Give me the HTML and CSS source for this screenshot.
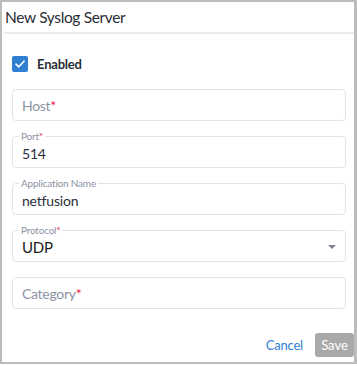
FILE: index.html
```html
<!DOCTYPE html>
<html>
<head>
<meta charset="utf-8">
<link rel="stylesheet" href="styles.css">
</head>
<body>
<div class="dialog">
  <div class="title">New Syslog Server</div>
  <div class="divider"></div>
  <div class="content">
    <label class="check-row">
      <span class="checkbox">
        <svg width="10" height="8" viewBox="0 0 10 8"><path d="M1 4.2 L3.8 6.8 L9 1.2" fill="none" stroke="#fff" stroke-width="1.6" stroke-linecap="round" stroke-linejoin="round"/></svg>
      </span>
      <span class="check-label">Enabled</span>
    </label>
    <div class="field">
      <span class="placeholder">Host<span class="req">*</span></span>
    </div>
    <div class="field">
      <span class="float-label">Port<span class="req">*</span></span>
      <span class="value">514</span>
    </div>
    <div class="field">
      <span class="float-label">Application Name</span>
      <span class="value">netfusion</span>
    </div>
    <div class="field select">
      <span class="float-label">Protocol<span class="req">*</span></span>
      <span class="value dark">UDP</span>
      <span class="arrow"></span>
    </div>
    <div class="field">
      <span class="placeholder">Category<span class="req">*</span></span>
    </div>
  </div>
  <div class="footer">
    <span class="cancel">Cancel</span>
    <span class="save">Save</span>
  </div>
</div>
</body>
</html>
```

FILE: styles.css
```css
* { box-sizing: border-box; }
html, body { margin: 0; padding: 0; background: #fff; }
body { font-family: Lato, "Open Sans", sans-serif; }
.dialog {
  width: 357px;
  height: 364px;
  border: 2px solid #bcbcbc;
  border-right-width: 3px;
  background: #fff;
  display: flex;
  flex-direction: column;
}
.title {
  font-size: 15.5px;
  letter-spacing: -0.35px;
  color: #2a2d34;
  padding: 5px 0 0 3px;
  height: 30px;
  line-height: 20px;
}
.divider {
  height: 2px;
  background: #e9e9ef;
  margin: 0 0 0 2px;
}
.content {
  padding: 0 8px 0 10px;
  display: flex;
  flex-direction: column;
  flex: 1;
}
.check-row {
  display: flex;
  align-items: center;
  gap: 9px;
  margin-top: 22px;
  height: 16px;
}
.checkbox {
  width: 16px;
  height: 16px;
  border-radius: 2px;
  background: #2f7fd3;
  display: flex;
  align-items: center;
  justify-content: center;
}
.check-label {
  font-size: 13px;
  font-weight: 700;
  letter-spacing: -0.2px;
  color: #2a2d34;
}
.field {
  position: relative;
  height: 32px;
  border: 1px solid #e2e3e8;
  border-radius: 4px;
  display: flex;
  align-items: center;
  padding-left: 9px;
  margin-top: 15px;
}
.check-row + .field { margin-top: 17px; }
.placeholder {
  font-size: 14px;
  letter-spacing: -0.3px;
  color: #8d93a3;
}
.req { color: #e8194b; }
.float-label {
  position: absolute;
  left: 6px;
  top: -7px;
  font-size: 10px;
  letter-spacing: -0.2px;
  line-height: 12px;
  color: #8d93a3;
  background: #fff;
  padding: 0 2px;
}
.value {
  font-size: 14px;
  letter-spacing: -0.2px;
  color: #2b2f3a;
  padding-top: 2px;
}
.value.dark { color: #1a1a1a; font-size: 15px; }
.arrow {
  position: absolute;
  right: 9px;
  top: 14px;
  width: 0;
  height: 0;
  border-left: 4px solid transparent;
  border-right: 4px solid transparent;
  border-top: 4px solid #7c8292;
}
.footer {
  display: flex;
  justify-content: flex-end;
  align-items: center;
  gap: 12px;
  padding: 0 0 5px 0;
}
.cancel {
  font-size: 13px;
  letter-spacing: -0.2px;
  color: #2f80d1;
}
.save {
  width: 39px;
  height: 24px;
  border-radius: 3px;
  background: #a9a9a9;
  color: #fff;
  font-size: 13px;
  display: flex;
  align-items: center;
  justify-content: center;
}
```
